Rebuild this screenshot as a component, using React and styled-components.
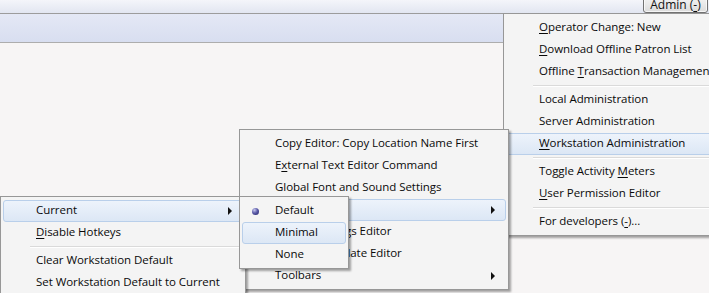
import React from "react";
import styled, { createGlobalStyle } from "styled-components";

const Global = createGlobalStyle`
  html, body { margin: 0; padding: 0; }
  body {
    background: #f7f5f5;
    font-family: "Open Sans", "Liberation Sans", sans-serif;
    overflow: hidden;
  }
  u { text-decoration-thickness: 1px; text-underline-offset: 2px; }
`;

const Page = styled.div`
  position: relative;
  width: 709px;
  height: 293px;
  overflow: hidden;
  display: flex;
  flex-direction: column;
  background: #f7f5f5;
`;

const Toolbar = styled.div`
  flex: none;
  height: 13px;
  display: flex;
  justify-content: flex-end;
  align-items: flex-end;
  padding-right: 1px;
  overflow: hidden;
  background: linear-gradient(#f4f5fa, #e2e6f1);
  border-bottom: 1px solid #9c9c9c;
`;

const AdminButton = styled.div`
  box-sizing: border-box;
  width: 65px;
  height: 18px;
  border: 1px solid #727272;
  border-radius: 3px;
  background: linear-gradient(#f6f6f6, #dcdcdc);
  font-size: 12px;
  line-height: 14px;
  color: #111;
  display: flex;
  align-items: flex-end;
  justify-content: center;
  box-shadow: inset 0 0 0 1px rgba(255, 255, 255, 0.7);
`;

const Band = styled.div`
  flex: none;
  height: 28px;
  background: linear-gradient(#e4e8f5, #d8def0);
  border-bottom: 1px solid #adadad;
`;

const Workspace = styled.div`
  flex: 1;
  background: #f7f5f5;
`;

const Menu = styled.div`
  position: absolute;
  left: ${(p) => p.$left}px;
  top: ${(p) => p.$top}px;
  width: ${(p) => p.$width}px;
  z-index: ${(p) => p.$z};
  box-sizing: border-box;
  padding: 3px 2px 2px;
  background: #f4f4f4;
  border: 1px solid #979797;
  box-shadow: 2px 2px 2px rgba(0, 0, 0, 0.35);
  display: flex;
  flex-direction: column;
  font-size: 11.5px;
  color: #0a0a0a;
`;

const Item = styled.div`
  box-sizing: border-box;
  height: 22px;
  display: flex;
  align-items: center;
  border: 1px solid ${(p) => (p.$active ? "#b9cfea" : "transparent")};
  border-radius: 3px;
  background: ${(p) =>
    p.$active ? "linear-gradient(#edf3fb, #dce7f5)" : "transparent"};
  white-space: nowrap;
`;

const IconSlot = styled.span`
  flex: none;
  width: 24px;
  display: flex;
  align-items: center;
  justify-content: center;
`;

const Label = styled.span`
  flex: 1;
  padding-left: 8px;
  padding-bottom: 2px;
  line-height: 18px;
  letter-spacing: -0.05px;
`;

const Arrow = styled.span`
  flex: none;
  width: 0;
  height: 0;
  margin-right: 10px;
  border-left: 4px solid #111;
  border-top: 4px solid transparent;
  border-bottom: 4px solid transparent;
`;

const Radio = styled.span`
  width: 7px;
  height: 7px;
  border-radius: 50%;
  background: radial-gradient(circle at 35% 30%, #c8c8f0 0%, #5c5ca8 45%, #1e1e66 100%);
`;

const Separator = styled.div`
  height: 6px;
  display: flex;
  align-items: center;
  padding-left: 27px;
  &::after {
    content: "";
    flex: 1;
    height: 0;
    border-top: 1px solid #dadada;
    border-bottom: 1px solid #ffffff;
  }
`;

function MenuList({ items, ...rest }) {
  return (
    <Menu {...rest}>
      {items.map((it, i) =>
        it === "sep" ? (
          <Separator key={i} />
        ) : (
          <Item key={i} $active={it.active}>
            <IconSlot>{it.radio ? <Radio /> : null}</IconSlot>
            <Label>{it.label}</Label>
            {it.sub ? <Arrow /> : null}
          </Item>
        )
      )}
    </Menu>
  );
}

const adminItems = [
  { label: <><u>O</u>perator Change: New</> },
  { label: <><u>D</u>ownload Offline Patron List</> },
  { label: <>Offline <u>T</u>ransaction Management</> },
  "sep",
  { label: "Local Administration" },
  { label: "Server Administration" },
  { label: <><u>W</u>orkstation Administration</>, active: true },
  "sep",
  { label: <>Toggle Activity <u>M</u>eters</> },
  { label: <><u>U</u>ser Permission Editor</> },
  "sep",
  { label: <>For developers (<u>-</u>)...</> },
];

const workstationItems = [
  { label: "Copy Editor: Copy Location Name First" },
  { label: <>E<u>x</u>ternal Text Editor Command</> },
  { label: "Global Font and Sound Settings" },
  { label: "Hotkeys", active: true, sub: true },
  { label: "Printer Settings Editor" },
  { label: "Receipt Template Editor" },
  { label: "Toolbars", sub: true },
];

const hotkeyItems = [
  { label: "Current", active: true, sub: true },
  { label: <><u>D</u>isable Hotkeys</> },
  "sep",
  { label: "Clear Workstation Default" },
  { label: "Set Workstation Default to Current" },
];

const currentItems = [
  { label: "Default", radio: true },
  { label: "Minimal", active: true },
  { label: "None" },
];

export default function App() {
  return (
    <>
      <Global />
      <Page>
        <Toolbar>
          <AdminButton>
            <span>
              Admin (<u>-</u>)
            </span>
          </AdminButton>
        </Toolbar>
        <Band />
        <Workspace />
        <MenuList items={adminItems} $left={503} $top={13} $width={232} $z={1} />
        <MenuList items={workstationItems} $left={239} $top={129} $width={270} $z={2} />
        <MenuList items={hotkeyItems} $left={0} $top={196} $width={246} $z={3} />
        <MenuList items={currentItems} $left={239} $top={196} $width={110} $z={4} />
      </Page>
    </>
  );
}
